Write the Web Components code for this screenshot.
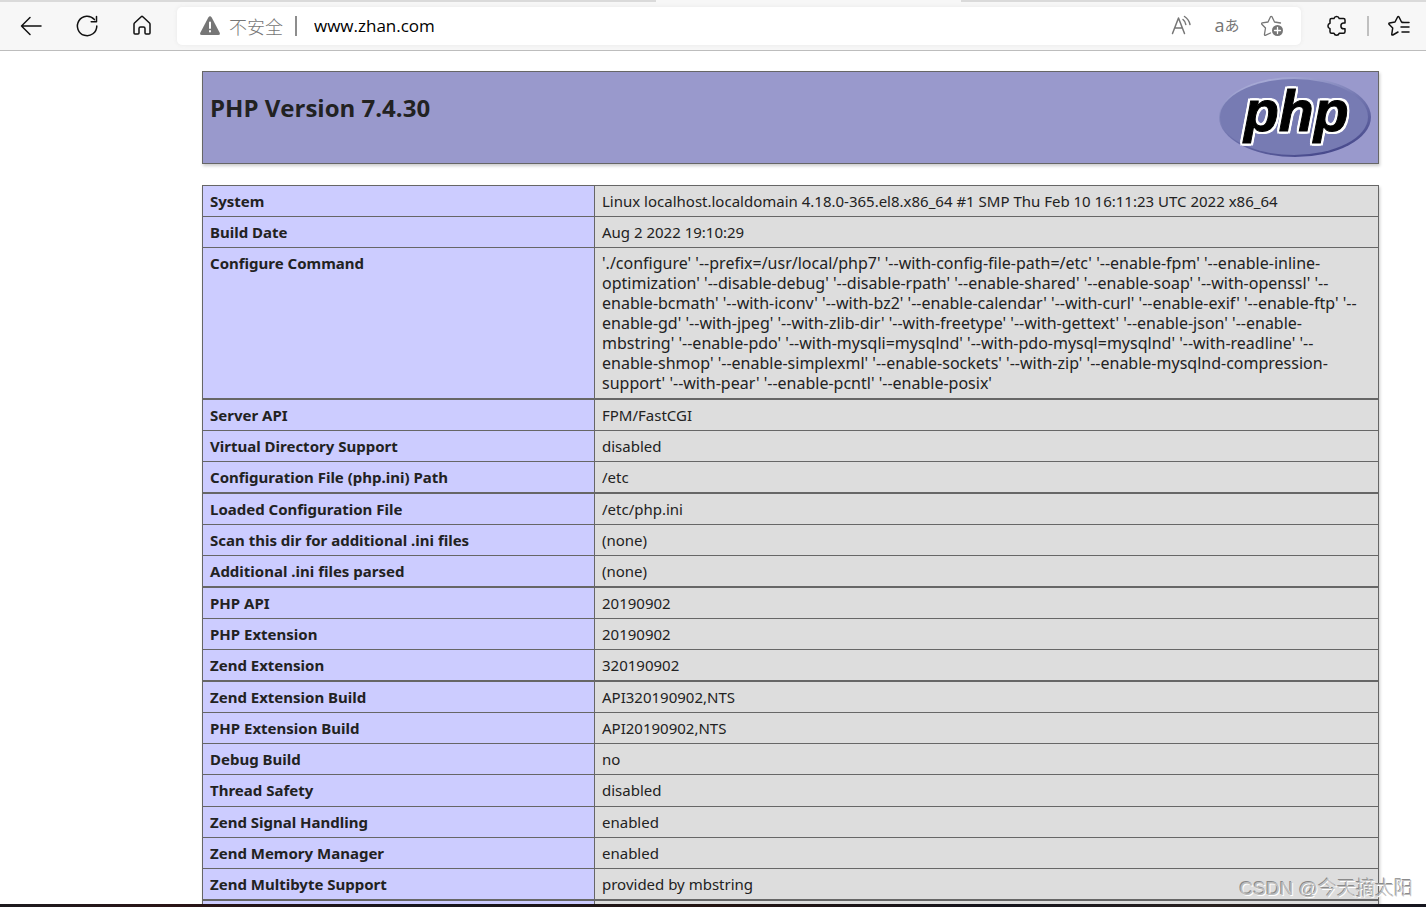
<!DOCTYPE html>
<html lang="zh-CN">
<head>
<meta charset="utf-8">
<title>phpinfo()</title>
<style>
html, body { height: 100%; margin: 0; }
body { background: #fff; color: #222; font-family: "Open Sans", "Noto Sans CJK SC", sans-serif; font-size: 15px; overflow: hidden; }
</style>
</head>
<body>
<browser-window>
  <browser-toolbar slot="toolbar" url="www.zhan.com" security="不安全"></browser-toolbar>
  <php-banner>PHP Version 7.4.30</php-banner>
  <info-table></info-table>
  <water-mark slot="overlay">CSDN @今天摘太阳</water-mark>
</browser-window>
<script>
function define(name, html, setup) {
  customElements.define(name, class extends HTMLElement {
    constructor() {
      super();
      this.attachShadow({ mode: 'open' }).innerHTML = html;
    }
    connectedCallback() { if (setup) setup(this, this.shadowRoot); }
  });
}

define('browser-window', `
<style>
:host { display: flex; flex-direction: column; height: 100vh; position: relative; }
main { flex: 1; min-height: 0; overflow: hidden; padding: 20px 47px 0 202px; display: flex; flex-direction: column; gap: 21px; }
footer { height: 3px; flex: none; background: linear-gradient(90deg, #1c1a1e, #2a1416 12%, #16161e 30%, #241412 50%, #15151d 70%, #2a2220 85%, #16161f); }
</style>
<slot name="toolbar"></slot><main><slot></slot></main><footer></footer><slot name="overlay"></slot>`);

define('icon-button', `
<style>
:host { display: block; flex: none; }
button { display: flex; align-items: center; justify-content: center; width: 32px; height: 32px; padding: 0; border: 0; background: none; color: inherit; }
</style>
<button type="button"><slot></slot></button>`, (host, root) => {
  root.querySelector('button').setAttribute('aria-label', host.getAttribute('label'));
});

define('browser-toolbar', `
<style>
:host { display: block; flex: none; background: #f7f7f7; border-bottom: 1px solid #bdbdbd; color: #111; }
.tabs { display: grid; grid-template-columns: 656fr 305fr 465fr; height: 2px; }
.tabs i { background: #dadada; }
.tabs i:nth-child(2) { background: #f7f7f7; }
.bar { display: flex; align-items: center; height: 48px; padding-left: 15px; }
.nav { display: flex; gap: 24px; margin-right: 18px; }
.address { flex: 1; display: flex; align-items: center; height: 38px; background: #fff; border-radius: 5px; box-shadow: 0 0 4px #e8e8e8; color: #767676; min-width: 0; }
.warn { margin: 0 8px 0 22px; flex: none; }
label { font-size: 18px; line-height: 24px; font-family: "Noto Sans CJK SC", sans-serif; font-weight: 300; white-space: nowrap; }
.rule { width: 2px; height: 20px; background: #8d8d8d; margin: 0 17px 0 12px; flex: none; }
input { flex: 1; min-width: 0; border: 0; outline: 0; padding: 0; background: none; color: #000; font: 17px/24px "Open Sans", sans-serif; }
.tools { display: flex; gap: 13px; margin-right: 13px; }
.side { display: flex; align-items: center; padding-left: 20px; padding-right: 11px; }
.side .rule { background: #c0c0c0; margin: 0 14px; }
.tr { display: flex; align-items: center; font: 18px/24px "Open Sans", sans-serif; white-space: nowrap; padding-bottom: 2px; }
.tr small { font: 15px/24px "Noto Sans CJK JP", sans-serif; }
svg { display: block; fill: none; stroke: currentColor; stroke-width: 1.5; stroke-linecap: round; stroke-linejoin: round; overflow: visible; }
</style>
<div class="tabs"><i></i><i></i><i></i></div>
<div class="bar">
  <div class="nav">
    <icon-button label="Back"><svg width="22" height="22"><path d="M21 11H1.500M10 2.500L1.500 11L10 19.500"/></svg></icon-button>
    <icon-button label="Refresh"><svg width="22" height="22"><path d="M20.800 11A9.700 9.700 0 1 1 18.400 4.600M20.500 1.500V6.700H15.200"/></svg></icon-button>
    <icon-button label="Home"><svg width="22" height="22"><path d="M2 9.200Q2 8.500 2.500 8L9.200 1.700Q10 1 10.800 1.700L17.500 8Q18 8.500 18 9.200V18Q18 19 17 19H14Q13 19 13 18V13.500Q13 12 11.500 12H8.500Q7 12 7 13.500V18Q7 19 6 19H3Q2 19 2 18Z"/></svg></icon-button>
  </div>
  <div class="address">
    <svg class="warn" width="22" height="20"><path fill="currentColor" stroke="none" d="M9.300 1.500Q11 -1 12.700 1.500L20.700 16.800Q21.500 19 19.300 19H2.700Q.500 19 1.300 16.800Z"/><path stroke="#fff" stroke-width="2" d="M11 6.500V12M11 15V15.500"/></svg>
    <label for="url"></label><span class="rule"></span>
    <input id="url" type="text" spellcheck="false">
    <div class="tools">
      <icon-button label="Read aloud"><svg width="22" height="22" stroke-width="1.300"><path d="M1.500 18.500L7.500 3L13.500 18.500M3.700 13H11.300M12 4.500Q14.500 6.500 14.800 9.500M13.500 1.500Q18 4.500 19 9.500"/></svg></icon-button>
      <icon-button label="Translate"><span class="tr">a<small>あ</small></span></icon-button>
      <icon-button label="Add to favorites"><svg width="22" height="22"><path stroke-width="1.300" d="M9.500 18L4.300 20.300Q3.300 20.300 3.500 19.200L4.500 13L.800 9.200Q.300 8.200 1.300 7.900L7 7L9.500 1.800Q10.200 1 11 1.800L13.500 7L19.500 8"/><circle cx="16.500" cy="15.500" r="5.500" fill="currentColor" stroke="none"/><path stroke="#fff" stroke-width="1.300" d="M13.500 15.500H19.500M16.500 12.500V18.500"/></svg></icon-button>
    </div>
  </div>
  <div class="side">
    <icon-button label="Extensions"><svg width="22" height="22"><path d="M8 3.500A2.700 2.700 0 0 1 13.200 3.500H17.500Q19 3.500 19 5V8H17.800A2.900 2.900 0 0 0 17.800 13.800H19V16.800Q19 18.300 17.500 18.300H13.200A2.700 2.700 0 0 1 8 18.300H5.500Q4 18.300 4 16.800V13.600A2.800 2.800 0 0 1 4 8.200V5Q4 3.500 5.500 3.500Z"/></svg></icon-button>
    <span class="rule"></span>
    <icon-button label="Favorites"><svg width="22" height="22"><path d="M10 17L4.800 20Q3.600 20.300 3.800 19L4.700 13L1 9.300Q.500 8.200 1.500 8L7 7L9.600 2Q10.300 1.200 11 2L13.500 7L15 7.300M14 7.500H21M13 12H21M14 17H21"/></svg></icon-button>
  </div>
</div>`, (host, root) => {
  root.querySelector('label').textContent = host.getAttribute('security');
  root.querySelector('input').value = host.getAttribute('url');
});

define('php-logo', `
<style>
:host { display: block; flex: none; }
svg { display: block; }
text { font: italic bold 57px "Liberation Sans", sans-serif; stroke: #000; stroke-width: 1px; fill: #000; filter: drop-shadow(2px 0 #fff) drop-shadow(-2px 0 #fff) drop-shadow(0 2px #fff) drop-shadow(0 -2px #fff); }
</style>
<svg width="154" height="82" viewBox="0 0 154 82" role="img" aria-label="PHP logo">
  <defs><linearGradient id="rim" x1=".2" y1="0" x2=".7" y2="1"><stop offset="0" stop-color="#b0b3dc"/><stop offset=".45" stop-color="#777bb3"/><stop offset="1" stop-color="#45478a"/></linearGradient></defs>
  <ellipse cx="77" cy="40" rx="76" ry="40" fill="url(#rim)"/>
  <ellipse cx="76" cy="40" rx="74" ry="38" fill="#777bb3"/>
  <text x="26" y="54">php</text>
</svg>`);

define('php-banner', `
<style>
:host { display: flex; flex: none; justify-content: space-between; align-items: flex-start; box-sizing: border-box; height: 93px; padding: 5px 6px 5px 7px; background: #99c; border: 1px solid #666; box-shadow: 1px 2px 3px #ccc; }
h1 { margin: 14px 0 0; font-size: 24px; line-height: 34px; font-weight: 700; }
</style>
<h1><slot></slot></h1><php-logo></php-logo>`);

const rows = [
  ['System', 'Linux localhost.localdomain 4.18.0-365.el8.x86_64 #1 SMP Thu Feb 10 16:11:23 UTC 2022 x86_64'],
  ['Build Date', 'Aug 2 2022 19:10:29'],
  ['Configure Command', "'./configure' '--prefix=/usr/local/php7' '--with-config-file-path=/etc' '--enable-fpm' '--enable-inline-<br>optimization' '--disable-debug' '--disable-rpath' '--enable-shared' '--enable-soap' '--with-openssl' '--<br>enable-bcmath' '--with-iconv' '--with-bz2' '--enable-calendar' '--with-curl' '--enable-exif' '--enable-ftp' '--<br>enable-gd' '--with-jpeg' '--with-zlib-dir' '--with-freetype' '--with-gettext' '--enable-json' '--enable-<br>mbstring' '--enable-pdo' '--with-mysqli=mysqlnd' '--with-pdo-mysql=mysqlnd' '--with-readline' '--<br>enable-shmop' '--enable-simplexml' '--enable-sockets' '--with-zip' '--enable-mysqlnd-compression-<br>support' '--with-pear' '--enable-pcntl' '--enable-posix'", 'long'],
  ['Server API', 'FPM/FastCGI', 'thick'],
  ['Virtual Directory Support', 'disabled'],
  ['Configuration File (php.ini) Path', '/etc'],
  ['Loaded Configuration File', '/etc/php.ini', 'thick'],
  ['Scan this dir for additional .ini files', '(none)'],
  ['Additional .ini files parsed', '(none)'],
  ['PHP API', '20190902', 'thick'],
  ['PHP Extension', '20190902'],
  ['Zend Extension', '320190902'],
  ['Zend Extension Build', 'API320190902,NTS', 'thick'],
  ['PHP Extension Build', 'API20190902,NTS'],
  ['Debug Build', 'no'],
  ['Thread Safety', 'disabled', 'tall'],
  ['Zend Signal Handling', 'enabled'],
  ['Zend Memory Manager', 'enabled'],
  ['Zend Multibyte Support', 'provided by mbstring'],
  ['', '', 'thick']
];

define('info-table', `
<style>
:host { display: block; flex: none; }
table { width: 100%; table-layout: fixed; border-spacing: 0; border: solid #666; border-width: 0 1px 1px; box-shadow: 1px 2px 3px #ccc; font: 15px/20px "Noto Sans", sans-serif; }
th, td { height: 20px; border-top: 1px solid #666; padding: 5px 7px; text-align: left; vertical-align: top; }
th { width: 377px; background: #ccf; font-weight: 700; }
td { border-left: 1px solid #666; padding-right: 0; background: #ddd; white-space: nowrap; }
.thick > * { border-top-width: 2px; }
.tall > * { padding-bottom: 6px; }
.long > td { font-size: 16px; }
</style>
<table><tbody></tbody></table>`, (host, root) => {
  root.querySelector('tbody').innerHTML = rows.map(([name, value, kind = '']) =>
    `<tr class="${kind}"><th scope="row">${name}</th><td>${value}</td></tr>`).join('');
});

define('water-mark', `
<style>
:host { position: absolute; right: 13px; bottom: 4px; font: 300 19px/28px "Liberation Sans", "Noto Sans CJK SC", sans-serif; color: #bcbcbc; text-shadow: 1px 1px 0 #fff, -1px -1px 0 #8a8a8a; white-space: nowrap; }
</style>
<slot></slot>`);
</script>
</body>
</html>
